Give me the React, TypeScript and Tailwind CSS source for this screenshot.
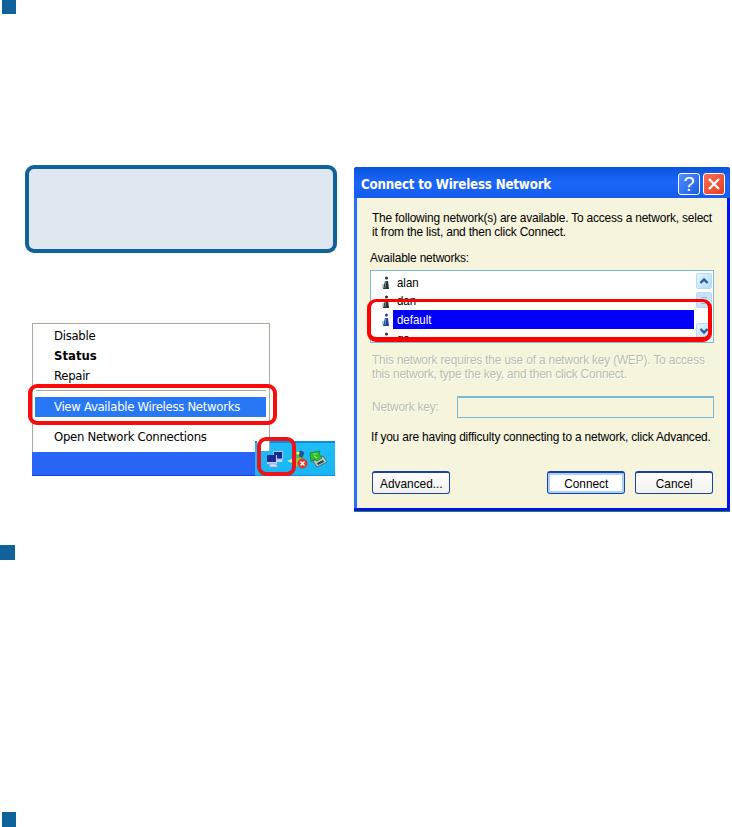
import type { ReactNode } from 'react';

function SectionMarker({ className }: { className: string }) {
  return <div className={`h-[14px] w-[14px] shrink-0 bg-[#10639a] ${className}`} />;
}

function MenuItem({ children, className = '' }: { children: ReactNode; className?: string }) {
  return (
    <div className={`flex h-5 items-center whitespace-nowrap pl-[21px] text-[13px] ${className}`}>
      {children}
    </div>
  );
}

function TrayIcons() {
  return (
    <svg className="h-[34px] w-[79px]" viewBox="0 0 79 34">
      <g>
        <path d="M18 8h10v9H18z" fill="#a9c0ff" />
        <path d="M19 9h8v6.500h-8z" fill="#15288f" />
        <path d="M21 17h6v2h-6z" fill="#c9d3f2" />
        <path d="M12 12h10v9H12z" fill="#c1ceff" />
        <path d="M12 12h9v7h-9z" fill="#1b2a94" />
        <path d="M14 21h7l2 3h-8z" fill="#dce1f7" stroke="#8492ce" strokeWidth=".7" />
      </g>
      <g>
        <path d="M32 18l7-3v7l-2-2z" fill="#d8f08f" />
        <path d="M39 18q2-4 7-3l4 3-1 6-9-1z" fill="#a9c13f" />
        <circle cx="45" cy="11.500" r="4" fill="#52ba3a" />
        <path d="M44 8q5-1 5 3l-2 4-3-2z" fill="#244fa5" />
        <circle cx="43" cy="10" r="1.600" fill="#edff81" />
        <circle cx="47.500" cy="20.500" r="4.600" fill="#e9382c" stroke="#c72c2b" strokeWidth=".7" />
        <path d="M45.500 18.500l4 4m0-4l-4 4" stroke="white" strokeWidth="1.400" />
      </g>
      <g>
        <path d="M58 18l10-5 4 6-10 5z" fill="#bdcbbf" stroke="#3d5865" strokeWidth=".8" />
        <path d="M62 20l6-3 1 2-6 3z" fill="#244b57" />
        <path d="M55 10l5-1 5-1-1 3 3 4-5 3-3-2-3 3z" fill="#31bd2c" stroke="#208229" strokeWidth=".8" />
        <path d="M58 11l4 0M59 13l3 2" stroke="#8aec64" strokeWidth="1.200" />
      </g>
    </svg>
  );
}

function ContextMenu() {
  return (
    <div className="relative ml-[7px] mt-[70px] h-[153px] w-[303px] font-['DejaVu_Sans_Condensed','DejaVu_Sans',sans-serif] text-black">
      <div className="h-[129px] w-[238px] border border-b-0 border-[#aaa99d] bg-white pt-[2px]">
        <MenuItem><span className="tracking-[-0.3px]">Disable</span></MenuItem>
        <MenuItem className="font-bold"><span>Status</span></MenuItem>
        <MenuItem><span className="tracking-[-0.3px]">Repair</span></MenuItem>
        <div className="mx-[3px] mt-[4px] h-px bg-[#aaa99d]" />
        <MenuItem className="ml-[2px] mr-[3px] mt-[6px] bg-[#2878f5] !pl-[19px] text-white">
          <span className="tracking-[-0.3px]">View Available Wireless Networks</span>
        </MenuItem>
        <MenuItem className="mt-[10px]"><span className="tracking-[-0.3px]">Open Network Connections</span></MenuItem>
      </div>
      <div className="flex h-6 items-end">
        <div className="h-6 w-[224px] border-b border-r border-[#1244cb] bg-[#2864f5]" />
        <div className="-ml-px h-[35px] w-[80px] border-b border-t-2 border-b-[#168ce1] border-t-[#1687de] bg-linear-to-b from-[#20bef8] to-[#18b6f2]">
          <TrayIcons />
        </div>
      </div>
      <div className="absolute left-[225px] top-[116px] h-[12px] w-[13px] border-r border-[#aaa99d] bg-white" />
      <div className="absolute left-[-4px] top-[61px] h-[41px] w-[249px] rounded-[9px] border-4 border-[#fb0b0b]" />
      <div className="absolute left-[225px] top-[114px] h-[39px] w-[39px] rounded-[9px] border-4 border-[#ed131b]" />
    </div>
  );
}

function NetworkIcon({ selected = false }: { selected?: boolean }) {
  const color = selected ? '#17479d' : '#263331';
  return (
    <svg className="ml-[11px] h-[15px] w-[8px] shrink-0" viewBox="0 0 8 15">
      <path d="M3 6h3l1 8H1z" fill={color} />
      <circle cx="4.500" cy="3" r="1.500" fill={color} />
      <path d="M4 6L3 13" stroke="#8cabb0" strokeWidth=".8" />
      <path d="M1 9v4" stroke={selected ? '#5c9ee5' : '#879894'} />
    </svg>
  );
}

function NetworkRow({ name, selected = false }: { name: string; selected?: boolean }) {
  return (
    <div className="flex h-[18.7px] items-center">
      <NetworkIcon selected={selected} />
      <span className={`ml-[3px] flex h-full grow items-center pl-[4px] text-[13px] ${selected ? 'bg-[#0000fb] text-white' : ''}`}>
        <span className="origin-left scale-x-[0.88]">{name}</span>
      </span>
    </div>
  );
}

function ScrollButton({ down = false }: { down?: boolean }) {
  return (
    <div className="flex h-[16px] w-[16px] items-center justify-center rounded-[2px] border border-[#b9dcf3] bg-linear-to-br from-[#e5f6ff] to-[#b4dcf5]">
      <svg className="h-[8px] w-[10px]" viewBox="0 0 10 8">
        <path d={down ? 'M1.500 2L5 5.500 8.500 2' : 'M1.500 6L5 2.500 8.500 6'} fill="none" stroke="#2859a6" strokeWidth="2.400" />
      </svg>
    </div>
  );
}

function NetworkList() {
  return (
    <div className="relative ml-[13px] mt-[5px] h-[73px] w-[344px]">
      <div className="flex h-full overflow-hidden border border-[#7fbdd3] bg-white">
        <div className="w-[323px] pt-[2px]">
          <NetworkRow name="alan" />
          <NetworkRow name="dan" />
          <NetworkRow name="default" selected />
          <NetworkRow name="ga" />
        </div>
        <div className="ml-[2px] flex w-[16px] flex-col pt-[2px]">
          <ScrollButton />
          <div className="mt-[3px] flex h-[16px] flex-col justify-center gap-[2px] rounded-[2px] border border-[#bcdaf2] bg-[#c8e2f6] px-[4px]">
            <div className="h-px bg-[#91b5dc]" />
            <div className="h-px bg-white" />
            <div className="h-px bg-[#91b5dc]" />
          </div>
          <div className="mt-[15px]"><ScrollButton down /></div>
        </div>
      </div>
      <div className="absolute left-[-3px] top-[29px] h-[43px] w-[345px] rounded-[9px] border-4 border-t-3 border-b-5 border-[#fe0000]" />
    </div>
  );
}

function DialogText({ children }: { children: ReactNode }) {
  return <span className="inline-block origin-left scale-x-[0.917] tracking-[-0.2px]">{children}</span>;
}

function XpButton({ children, active = false }: { children: ReactNode; active?: boolean }) {
  return (
    <button className={`flex h-[23px] w-[78px] items-center justify-center rounded-[3px] border border-t-2 border-[#1744a4] pt-px text-[13px] ${active ? 'bg-white shadow-[inset_0_0_0_2px_#acd1fa]' : 'bg-linear-to-b from-white to-[#f1f1ed]'}`}>
      <span className="scale-x-[0.91]">{children}</span>
    </button>
  );
}

function WirelessDialog() {
  return (
    <div className="mt-[2px] h-[345px] w-[376px] overflow-hidden rounded-t-[3px] border-b border-[#268435] bg-[#0018ee] font-['Liberation_Sans',Arial,sans-serif] text-black">
      <div className="flex h-[31px] items-center justify-between bg-linear-to-b from-[#0754dc] via-[#1b66f9] to-[#155cf0] pl-[7px] pr-[5px] pt-[2px]">
        <h1 className="origin-left scale-x-[0.945] whitespace-nowrap pt-px font-['DejaVu_Sans_Condensed','DejaVu_Sans',sans-serif] text-[14px] font-bold tracking-[-0.2px] text-white">
          Connect to Wireless Network
        </h1>
        <div className="flex gap-[3px]">
          <div className="flex h-[22px] w-[22px] items-center justify-center rounded-[3px] border border-white bg-linear-to-br from-[#528eff] to-[#195ce6] text-[20px] leading-none text-white">?</div>
          <div className="flex h-[22px] w-[22px] items-center justify-center rounded-[3px] border border-white bg-linear-to-br from-[#fb6f55] to-[#e63a1c]">
            <svg className="h-[12px] w-[12px]" viewBox="0 0 12 12"><path d="M1 1l10 10M11 1L1 11" stroke="white" strokeWidth="2.400" /></svg>
          </div>
        </div>
      </div>
      <div className="h-[310px] border-l-3 border-r-3 border-l-[#2870fa] border-r-[#0013f5] bg-[#f6f4dd]">
        <div className="whitespace-nowrap pl-[15px] pt-[13px] text-[13px] leading-[14px]">
          <div><DialogText>The following network(s) are available. To access a network, select</DialogText></div>
          <div><DialogText>it from the list, and then click Connect.</DialogText></div>
          <div className="-ml-[2px] mt-[12px]"><DialogText>Available networks:</DialogText></div>
        </div>
        <NetworkList />
        <div className="whitespace-nowrap pl-[15px] pt-[10px] text-[13px] leading-[14px] text-[#bbbda8] [text-shadow:1px_1px_white]">
          <div><DialogText>This network requires the use of a network key (WEP). To access</DialogText></div>
          <div><DialogText>this network, type the key, and then click Connect.</DialogText></div>
        </div>
        <div className="mt-[15px] flex h-[22px] items-center pl-[15px] text-[13px] text-[#bbbda8] [text-shadow:1px_1px_white]">
          <div className="w-[85px]"><DialogText>Network key:</DialogText></div>
          <div className="h-[22px] w-[257px] border border-t-2 border-[#7abbd8]" />
        </div>
        <div className="mt-[12px] whitespace-nowrap pl-[14px] text-[13px] leading-[14px]">
          <DialogText>If you are having difficulty connecting to a network, click Advanced.</DialogText>
        </div>
        <div className="ml-[15px] mt-[27px] flex w-[341px]">
          <XpButton>Advanced...</XpButton>
          <div className="ml-auto flex gap-[10px]">
            <XpButton active>Connect</XpButton>
            <XpButton>Cancel</XpButton>
          </div>
        </div>
      </div>
    </div>
  );
}

export default function App() {
  return (
    <main className="flex h-[827px] w-[732px] flex-col overflow-hidden bg-white">
      <SectionMarker className="ml-[2px]" />
      <section className="mt-[151px] flex items-start pl-[25px]">
        <div className="w-[312px]">
          <div className="h-[88px] rounded-[9px] border-4 border-[#10639a] bg-[#dfe8f1]" />
          <ContextMenu />
        </div>
        <div className="ml-[17px]"><WirelessDialog /></div>
      </section>
      <SectionMarker className="mt-[33px] !h-[15px] !w-[15px]" />
      <SectionMarker className="ml-[2px] mt-[252px] !h-[15px]" />
    </main>
  );
}
